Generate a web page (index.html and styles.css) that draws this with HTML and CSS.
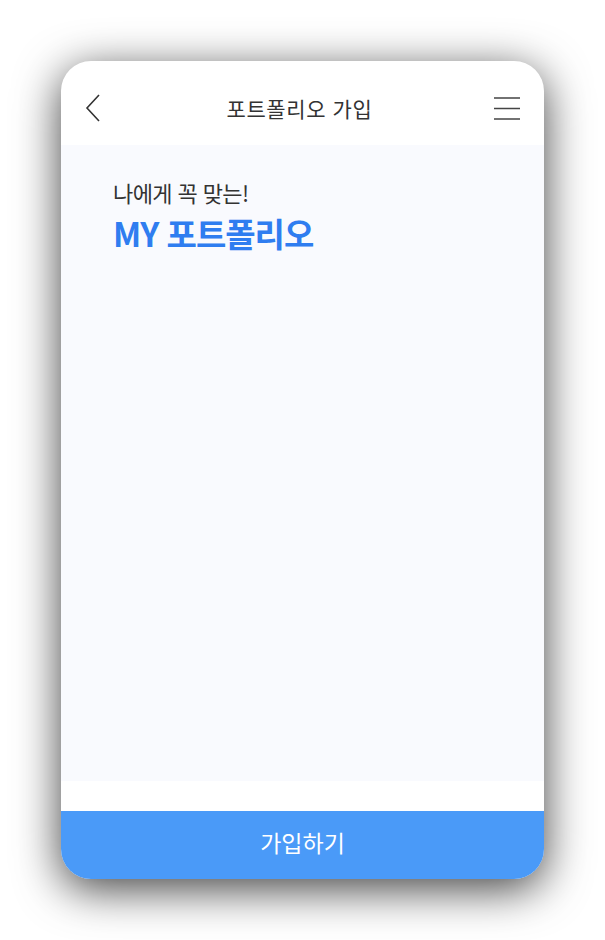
FILE: index.html
```html
<!DOCTYPE html>
<html lang="ko">
<head>
    <meta charset="UTF-8">
    <meta name="viewport" content="width=device-width, initial-scale=1.0">
    <title>포트폴리오 가입</title>
    <link rel="stylesheet" href="styles.css">
</head>
<body>
    <div class="phone">
        <div class="header">
            <a class="back" href="#">
                <svg width="16" height="28" viewBox="0 0 16 28"><polyline points="14,1 2,14 14,27" fill="none" stroke="#333" stroke-width="1.6"/></svg>
            </a>
            <span class="title">포트폴리오 가입</span>
            <a class="menu" href="#">
                <svg width="26" height="24" viewBox="0 0 26 24"><path d="M0 2H26M0 12.5H26M0 23H26" stroke="#444" stroke-width="1.5"/></svg>
            </a>
        </div>
        <div class="content">
            <p class="sub">나에게 꼭 맞는!</p>
            <h1 class="headline">MY 포트폴리오</h1>
        </div>
        <div class="spacer"></div>
        <button class="join-btn">가입하기</button>
    </div>
</body>
</html>
```

FILE: styles.css
```css
body {
    margin: 0;
    padding: 61px;
    background: #fff;
    font-family: 'Noto Sans CJK KR', 'Noto Sans', sans-serif;
}

.phone {
    width: 483px;
    height: 818px;
    border-radius: 30px;
    background: #fff;
    overflow: hidden;
    display: flex;
    flex-direction: column;
    box-shadow: 0 10px 45px rgba(0, 0, 0, 0.75);
}

.header {
    height: 84px;
    box-sizing: border-box;
    padding: 10px 24px 0;
    flex-shrink: 0;
    display: flex;
    align-items: center;
    justify-content: space-between;
}

.header a {
    display: flex;
}

.title {
    font-size: 21px;
    color: #333;
    letter-spacing: 0.6px;
    margin-left: 4px;
}

.content {
    flex: 1;
    background: #f9fafe;
    padding: 34px 52px;
}

.sub {
    margin: 0 0 9px;
    font-size: 22px;
    color: #333;
    letter-spacing: -0.6px;
    line-height: 26px;
}

.headline {
    margin: 0;
    font-size: 33px;
    font-weight: 700;
    color: #2f7df0;
    letter-spacing: -1px;
    line-height: 38px;
}

.spacer {
    height: 30px;
    flex-shrink: 0;
}

.join-btn {
    height: 68px;
    flex-shrink: 0;
    border: none;
    background: #4a9af8;
    color: #fff;
    font-family: inherit;
    font-size: 23px;
    padding: 0 0 6px;
}
```
